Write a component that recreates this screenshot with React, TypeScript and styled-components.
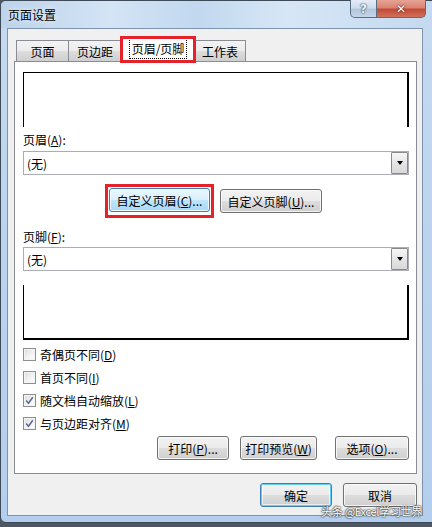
import React from 'react';
import styled, { createGlobalStyle, css } from 'styled-components';

const GlobalStyle = createGlobalStyle`
  html, body {
    margin: 0;
    padding: 0;
  }
  body {
    width: 432px;
    height: 527px;
    overflow: hidden;
    background: #4f5762;
    font-family: "Noto Sans CJK SC", "Microsoft YaHei", sans-serif;
    font-size: 12px;
    color: #000;
  }
`;

const Window = styled.div`
  position: relative;
  box-sizing: border-box;
  width: 440px;
  height: 523px;
  display: flex;
  flex-direction: column;
  border: 1px solid #3f4a58;
  border-radius: 6px;
  background: linear-gradient(
    to bottom,
    #c6dbf1 0%,
    #bcd4ee 40%,
    #b4cfed 100%
  );
`;

const TitleBar = styled.div`
  height: 27px;
  display: flex;
  background: linear-gradient(
    to right,
    #bcd3ea 0%,
    #d3e4f5 25%,
    #c2d8ef 45%,
    #d6e6f6 65%,
    #c3d9ef 100%
  );
  border-radius: 5px 5px 0 0;
`;

const Title = styled.div`
  align-self: center;
  padding-left: 7px;
  margin-top: 1px;
  font-size: 12px;
  line-height: 14px;
  text-shadow: 0 0 6px rgba(255, 255, 255, 0.9);
`;

const CaptionButtons = styled.div`
  margin-left: auto;
  margin-right: 13px;
  margin-top: -1px;
  display: flex;
  align-self: flex-start;
`;

const CaptionButton = styled.div<{ $close?: boolean }>`
  box-sizing: border-box;
  height: 18px;
  display: flex;
  align-items: center;
  justify-content: center;
  border: 1px solid #5b6b80;
  border-top: none;
  font-family: "DejaVu Sans", sans-serif;
  font-weight: bold;
  font-size: 12px;
  color: #fff;
  ${(p) =>
    p.$close
      ? css`
          width: 49px;
          border-left: none;
          border-radius: 0 0 5px 0;
          background: linear-gradient(#e8a395 0%, #d98474 45%, #c24a35 55%, #d0705c 100%);
          text-shadow: 0 0 1px #5a1a10, 0 0 2px #5a1a10;
        `
      : css`
          width: 27px;
          border-radius: 0 0 0 5px;
          background: linear-gradient(#e4ecf6 0%, #cfdcec 45%, #b4c6dd 55%, #c7d6e9 100%);
          color: #eef3f9;
          text-shadow: 0 0 1px #2f3d52, 0 0 2px #2f3d52;
        `}
`;

const Client = styled.div`
  position: relative;
  flex: 1;
  box-sizing: border-box;
  margin: 0 16px 6px 6px;
  border: 1px solid #7f93ab;
  background: #f0f0f0;
  padding: 8px 5px 0 6px;
  display: flex;
  flex-direction: column;
`;

const TabStrip = styled.div`
  height: 24px;
  display: flex;
  align-items: flex-end;
  padding-left: 2px;
`;

const Tab = styled.div<{ $w: number; $active?: boolean }>`
  box-sizing: border-box;
  width: ${(p) => p.$w}px;
  height: 21px;
  margin-left: -1px;
  display: flex;
  align-items: center;
  justify-content: center;
  border: 1px solid #898c95;
  border-bottom: none;
  background: linear-gradient(#f3f3f3 0%, #ebebeb 50%, #dddddd 51%, #cfcfcf 100%);
  &:first-child {
    margin-left: 0;
  }
  ${(p) =>
    p.$active &&
    css`
      position: relative;
      z-index: 1;
      height: 25px;
      margin-bottom: -1px;
      background: #fff;
      outline: 3px solid #e52129;
      outline-offset: -2px;
      padding-bottom: 3px;
    `}
`;

const FocusText = styled.span`
  padding: 1px 2px;
  outline: 1px dotted #000;
  outline-offset: 0;
`;

const Panel = styled.div`
  box-sizing: border-box;
  height: 413px;
  border: 1px solid #898c95;
  background: #fff;
  padding: 10px 7px 0 8px;
  display: flex;
  flex-direction: column;
`;

const Preview = styled.div<{ $footer?: boolean }>`
  box-sizing: border-box;
  height: 55px;
  border-left: 1px solid #000;
  border-right: 2px solid #000;
  ${(p) =>
    p.$footer
      ? css`
          margin-top: 14px;
          border-bottom: 2px solid #000;
        `
      : css`
          border-top: 1px solid #000;
        `}
`;

const FieldLabel = styled.div<{ $gap: number }>`
  margin-top: ${(p) => p.$gap}px;
  line-height: 14px;
`;

const Combo = styled.div<{ $gap: number }>`
  box-sizing: border-box;
  margin-top: ${(p) => p.$gap}px;
  height: 24px;
  border: 1px solid #abadb3;
  display: flex;
  align-items: center;
  padding-left: 3px;
`;

const ComboValue = styled.span`
  flex: 1;
`;

const DropButton = styled.div`
  box-sizing: border-box;
  width: 17px;
  height: 22px;
  border: 1px solid #8a8a8a;
  border-radius: 1px;
  background: linear-gradient(#f6f6f6 0%, #e6e6e6 50%, #d8d8d8 100%);
  display: flex;
  align-items: center;
  justify-content: center;
  &::after {
    content: '';
    border-left: 3.5px solid transparent;
    border-right: 3.5px solid transparent;
    border-top: 4px solid #000;
  }
`;

const ButtonRow = styled.div<{ $gap: number; $justify: string }>`
  margin-top: ${(p) => p.$gap}px;
  display: flex;
  justify-content: ${(p) => p.$justify};
`;

/* red annotation frame drawn round a control, kept out of the layout */
const Flag = styled.div<{ $mr?: number }>`
  border: 3px solid #e52129;
  padding: 1px;
  margin: -5px ${(p) => (p.$mr ?? 0) - 5}px -5px -5px;
`;

const Button = styled.div<{
  $w: number;
  $kind?: 'hot' | 'default';
  $mr?: number;
}>`
  box-sizing: border-box;
  width: ${(p) => p.$w}px;
  height: 24px;
  margin-right: ${(p) => p.$mr ?? 0}px;
  display: flex;
  align-items: center;
  justify-content: center;
  border: 1px solid #707070;
  border-radius: 3px;
  background: linear-gradient(#f2f2f2 0%, #ebebeb 50%, #dddddd 51%, #cfcfcf 100%);
  box-shadow: inset 0 0 0 1px rgba(252, 252, 252, 0.8);
  white-space: nowrap;
  ${(p) =>
    p.$kind === 'hot' &&
    css`
      border-color: #3c7fb1;
      background: linear-gradient(#eaf6fd 0%, #d9f0fc 50%, #bee6fd 51%, #a7d9f5 100%);
    `}
  ${(p) =>
    p.$kind === 'default' &&
    css`
      border-color: #3c7fb1;
      box-shadow: inset 0 0 0 1px #5fd0f5, inset 0 0 0 2px rgba(255, 255, 255, 0.6);
    `}
`;

const CheckList = styled.div`
  margin-top: 3px;
  display: flex;
  flex-direction: column;
  gap: 1px;
`;

const CheckRow = styled.label`
  height: 22px;
  display: flex;
  align-items: center;
  gap: 4px;
`;

const Box = styled.span`
  box-sizing: border-box;
  width: 13px;
  height: 13px;
  border: 1px solid #8e8f8f;
  background: linear-gradient(135deg, #dcdcdc 0%, #f4f4f4 60%, #ffffff 100%);
  box-shadow: inset 0 0 0 1px #f4f4f4;
  display: flex;
  align-items: center;
  justify-content: center;
`;

const Watermark = styled.div`
  position: absolute;
  right: 0;
  bottom: -2px;
  font-size: 11px;
  line-height: 11px;
  color: #fff;
  letter-spacing: -0.3px;
  text-shadow: 0 0 1px #333, 0 0 2px #333, 0 0 2px #555;
`;

function CheckBox({ checked, children }: { checked?: boolean; children: React.ReactNode }) {
  return (
    <CheckRow>
      <Box>
        {checked && (
          <svg width="9" height="9" viewBox="0 0 9 9">
            <path d="M1.2 4.6 L3.5 7.2 L7.8 1.2" fill="none" stroke="#5a6a98" strokeWidth="1.5" />
          </svg>
        )}
      </Box>
      <span>{children}</span>
    </CheckRow>
  );
}

export default function App() {
  return (
    <>
      <GlobalStyle />
      <Window>
        <TitleBar>
          <Title>页面设置</Title>
          <CaptionButtons>
            <CaptionButton>?</CaptionButton>
            <CaptionButton $close>✕</CaptionButton>
          </CaptionButtons>
        </TitleBar>

        <Client>
          <TabStrip>
            <Tab $w={53}>页面</Tab>
            <Tab $w={54}>页边距</Tab>
            <Tab $w={74} $active>
              <FocusText>页眉/页脚</FocusText>
            </Tab>
            <Tab $w={52}>工作表</Tab>
          </TabStrip>

          <Panel>
            <Preview />

            <FieldLabel $gap={6}>
              页眉(<u>A</u>):
            </FieldLabel>
            <Combo $gap={4}>
              <ComboValue>(无)</ComboValue>
              <DropButton />
            </Combo>

            <ButtonRow $gap={14} $justify="center">
              <Flag $mr={11}>
                <Button $w={101} $kind="hot">
                  自定义页眉(<u>C</u>)...
                </Button>
              </Flag>
              <Button $w={102}>
                自定义页脚(<u>U</u>)...
              </Button>
            </ButtonRow>

            <FieldLabel $gap={17}>
              页脚(<u>F</u>):
            </FieldLabel>
            <Combo $gap={3}>
              <ComboValue>(无)</ComboValue>
              <DropButton />
            </Combo>

            <Preview $footer />

            <CheckList>
              <CheckBox>
                奇偶页不同(<u>D</u>)
              </CheckBox>
              <CheckBox>
                首页不同(<u>I</u>)
              </CheckBox>
              <CheckBox checked>
                随文档自动缩放(<u>L</u>)
              </CheckBox>
              <CheckBox checked>
                与页边距对齐(<u>M</u>)
              </CheckBox>
            </CheckList>

            <ButtonRow $gap={2} $justify="flex-end">
              <Button $w={72} $mr={11}>
                打印(<u>P</u>)...
              </Button>
              <Button $w={77} $mr={18}>
                打印预览(<u>W</u>)
              </Button>
              <Button $w={74}>
                选项(<u>O</u>)...
              </Button>
            </ButtonRow>
          </Panel>

          <ButtonRow $gap={9} $justify="flex-end">
            <Button $w={72} $mr={11} $kind="default">
              确定
            </Button>
            <Button $w={74}>取消</Button>
          </ButtonRow>

          <Watermark>头条 @Excel学习世界</Watermark>
        </Client>
      </Window>
    </>
  );
}
